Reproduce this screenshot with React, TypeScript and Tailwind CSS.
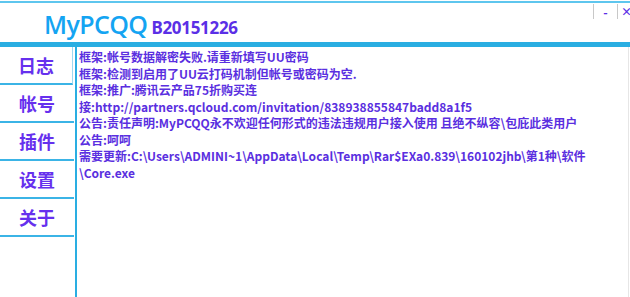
const navItems = ["日志", "帐号", "插件", "设置", "关于"];

const logLines = [
  "框架:帐号数据解密失败.请重新填写UU密码",
  "框架:检测到启用了UU云打码机制但帐号或密码为空.",
  "框架:推广:腾讯云产品75折购买连",
  "接:http://partners.qcloud.com/invitation/838938855847badd8a1f5",
  "公告:责任声明:MyPCQQ永不欢迎任何形式的违法违规用户接入使用 且绝不纵容\\包庇此类用户",
  "公告:呵呵",
  "需要更新:C:\\Users\\ADMINI~1\\AppData\\Local\\Temp\\Rar$EXa0.839\\160102jhb\\第1种\\软件",
  "\\Core.exe",
];

const App = () => {
  return (
    <div className="w-[630px] h-[297px] bg-white overflow-hidden flex flex-col font-['Noto_Sans_CJK_SC',sans-serif]">
      <div className="h-[2px] bg-[#5ec6ee] mt-[1px]" />
      <div className="relative h-[39px] flex items-end pl-[44px] pb-[5px]">
        <span className="font-['Open_Sans',sans-serif] font-semibold text-[25px] leading-none text-[#14a4f2] tracking-[-0.6px]">
          MyPCQQ
        </span>
        <span className="ml-[4px] font-['Noto_Sans',sans-serif] font-bold text-[17px] leading-none text-[#5b2fe6] mb-[1px] tracking-[-0.3px]">
          B20151226
        </span>
        <div className="absolute right-0 top-[1px] flex">
          <div className="w-[24px] h-[15px] border-l border-[#c8c8c8] flex items-center justify-center text-[#5b2fe6] font-bold text-[12px] leading-none">
            -
          </div>
          <div className="w-[13px] h-[15px] border-l border-[#c8c8c8] flex items-center pl-[3px] text-[#5b2fe6] font-bold text-[11px] leading-none">
            ×
          </div>
        </div>
      </div>
      <div className="h-[5px] bg-[#2aaee2]" />
      <div className="flex flex-1">
        <div className="w-[74px] flex flex-col">
          {navItems.map((item, index) => (
            <div
              key={index}
              className={
                "h-[38px] flex items-center justify-center border-b-2 border-[#3bb4e6] text-[18px] font-bold text-[#6630ee] " +
                (index === 0 ? "border-r border-r-[#9fd8f0] mr-[1px]" : "")
              }
            >
              {item}
            </div>
          ))}
        </div>
        <div className="ml-[1px] flex-1 border-l-2 border-[#2aaee2] pl-[2px] pt-[2px] border-r border-r-[#e6e6e6] mr-[1px]">
          {logLines.map((line, index) => (
            <div
              key={index}
              className="text-[12px] leading-[16.5px] font-bold text-[#5a2fe0] whitespace-nowrap"
            >
              {line}
            </div>
          ))}
        </div>
      </div>
    </div>
  );
};

export default App;
